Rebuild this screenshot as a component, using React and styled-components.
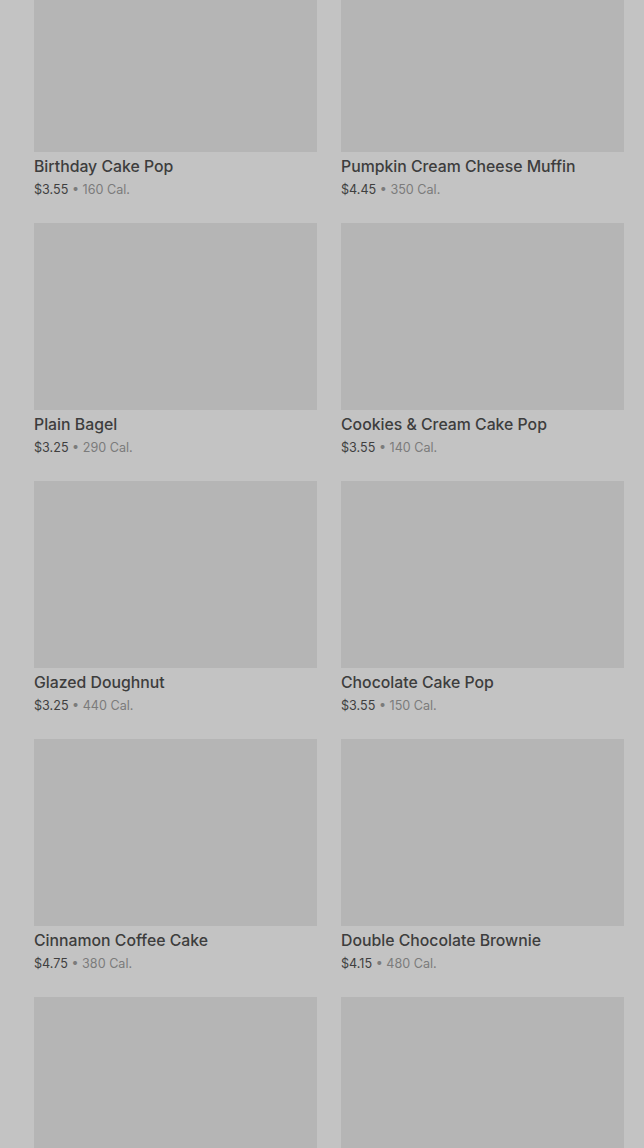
import React from 'react';
import styled, { createGlobalStyle } from 'styled-components';

const GlobalStyle = createGlobalStyle`
  html, body {
    margin: 0;
    padding: 0;
    background: #c3c3c3;
    font-family: Inter, "Noto Sans", "Liberation Sans", sans-serif;
  }
`;

const Page = styled.div`
  height: 1148px;
  overflow: hidden;
  background: #c3c3c3;
`;

const Grid = styled.div`
  display: grid;
  grid-template-columns: 283px 283px;
  column-gap: 24px;
  row-gap: 24px;
  padding: 0 20px 0 34px;
  margin-top: -35px;
`;

const Card = styled.div`
  display: flex;
  flex-direction: column;
`;

const Thumb = styled.div`
  height: 187px;
  background: #b5b5b5;
`;

const Title = styled.div`
  margin-top: 5px;
  font-size: 15.8px;
  line-height: 20px;
  font-weight: 500;
  color: #3d3d3d;
`;

const Meta = styled.div`
  margin-top: 4px;
  font-size: 12.6px;
  line-height: 18px;
  color: #7b7b7b;
`;

const Price = styled.span`
  color: #3f3f3f;
`;

const items = [
  { name: 'Birthday Cake Pop', price: '$3.55', cal: 160 },
  { name: 'Pumpkin Cream Cheese Muffin', price: '$4.45', cal: 350 },
  { name: 'Plain Bagel', price: '$3.25', cal: 290 },
  { name: 'Cookies & Cream Cake Pop', price: '$3.55', cal: 140 },
  { name: 'Glazed Doughnut', price: '$3.25', cal: 440 },
  { name: 'Chocolate Cake Pop', price: '$3.55', cal: 150 },
  { name: 'Cinnamon Coffee Cake', price: '$4.75', cal: 380 },
  { name: 'Double Chocolate Brownie', price: '$4.15', cal: 480 },
  { id: 'next-1' },
  { id: 'next-2' },
];

export default function App() {
  return (
    <Page>
      <GlobalStyle />
      <Grid>
        {items.map((item) => (
          <Card key={item.name || item.id}>
            <Thumb />
            {item.name && (
              <>
                <Title>{item.name}</Title>
                <Meta>
                  <Price>{item.price}</Price> • {item.cal} Cal.
                </Meta>
              </>
            )}
          </Card>
        ))}
      </Grid>
    </Page>
  );
}
